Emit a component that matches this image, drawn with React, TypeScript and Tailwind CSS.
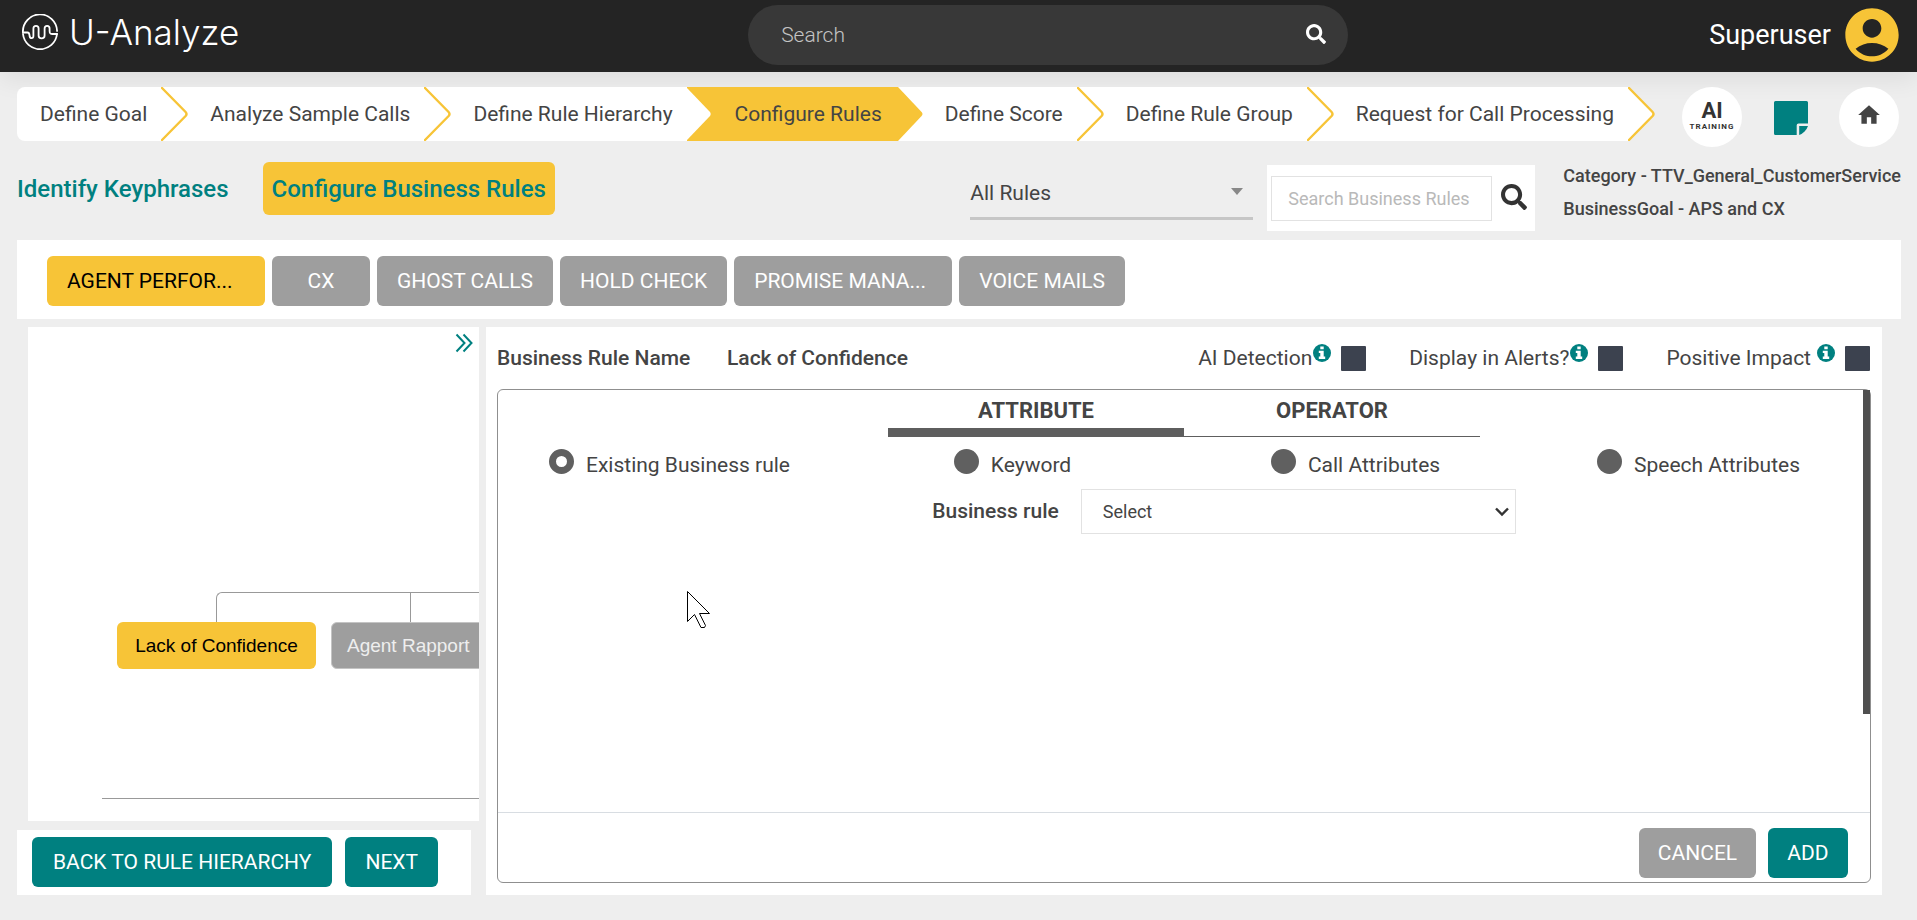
import React from "react";
import { FaSearch } from "react-icons/fa";
import { MdAccountCircle, MdHome } from "react-icons/md";

const tabs = ["AGENT PERFOR...", "CX", "GHOST CALLS", "HOLD CHECK", "PROMISE MANA...", "VOICE MAILS"];

const sources = ["Existing Business rule", "Keyword", "Call Attributes", "Speech Attributes"];

const flags = [
  { id: "ai-detection", label: "AI Detection", spaced: false },
  { id: "display-alerts", label: "Display in Alerts?", spaced: false },
  { id: "positive-impact", label: "Positive Impact", spaced: true },
];

function Logo() {
  return (
    <a href="#" className="flex items-center gap-[11px] text-white">
      <svg viewBox="0 0 36 36" className="size-9" fill="none" stroke="currentColor" strokeWidth="1.8" strokeLinecap="round" aria-hidden="true">
        <path d="M0.9 18 A17.1 17.1 0 0 1 35.1 17" />
        <path d="M35 20 A17.1 17.1 0 0 1 1 20" />
        <path d="M1 18.5 H5.5 C7.5 18.5 7.3 20 7.6 22 C8 24.8 11.4 24.8 11.4 22 V14.5 C11.4 11 16.6 11 16.6 14.5 V21.5 C16.6 25.4 22.6 25.4 22.6 21.5 V14.5 C22.6 11 27.6 11 27.6 14.5 V17 C27.6 20 28.6 20 30.5 20 H35" />
      </svg>
      <span className="font-['Inter',sans-serif] text-[35px] leading-10 font-light">U-Analyze</span>
    </a>
  );
}

function InfoIcon({ className }: { className: string }) {
  return (
    <svg viewBox="0 0 18 18" className={className} aria-hidden="true">
      <circle cx="9" cy="9" r="9" fill="currentColor" />
      <path d="M7.3 2.4 H10.7 V5.3 H7.3 Z M5.8 6.8 H10.7 V12.6 H12.2 V14.9 H5.8 V12.6 H7.3 V9.1 H5.8 Z" fill="#fff" />
    </svg>
  );
}

function Chevron() {
  return (
    <svg viewBox="0 0 27 54" className="h-[54px] w-[27px] shrink-0" aria-hidden="true">
      <path d="M0 0 L25 25 Q27 27 25 29 L0 54 Z" fill="#fff" />
      <path d="M1 1 L24.6 25 Q26.4 27 24.6 29 L1 53" fill="none" stroke="#f7c437" strokeWidth="2.4" strokeLinecap="round" />
    </svg>
  );
}

function Step({ children, first = false }: { children: string; first?: boolean }) {
  return (
    <li className="flex">
      <a
        href="#"
        className={
          first
            ? "flex h-[54px] items-center rounded-l-lg bg-white pt-0.5 pr-[14px] pl-[23px]"
            : "flex h-[54px] items-center bg-white pt-0.5 pr-[14px] pl-[22px]"
        }
      >
        {children}
      </a>
    </li>
  );
}

function Stepper() {
  return (
    <ol className="flex items-start text-[21px] whitespace-nowrap text-[#444]">
      <Step first>Define Goal</Step>
      <li className="bg-white"><Chevron /></li>
      <Step>Analyze Sample Calls</Step>
      <li className="bg-white"><Chevron /></li>
      <Step>Define Rule Hierarchy</Step>
      <li className="flex" aria-current="step">
        <svg viewBox="0 0 24 54" className="h-[54px] w-6" aria-hidden="true">
          <path d="M0 0 H24 V54 H0 Z" fill="#f7c437" />
          <path d="M0 1 L23 25 Q24.4 27 23 29 L0 53 Z" fill="#fff" />
        </svg>
        <a href="#" className="flex h-[54px] items-center bg-[#f7c437] pt-0.5 pr-4 pl-6">Configure Rules</a>
        <svg viewBox="0 0 25 54" className="h-[54px] w-[25px] bg-white" aria-hidden="true">
          <path d="M0 0 L23.6 25 Q25.4 27 23.6 29 L0 54 Z" fill="#f7c437" />
        </svg>
      </li>
      <Step>Define Score</Step>
      <li className="bg-white"><Chevron /></li>
      <Step>Define Rule Group</Step>
      <li className="bg-white"><Chevron /></li>
      <Step>Request for Call Processing</Step>
      <li><Chevron /></li>
    </ol>
  );
}

function RuleTree() {
  return (
    <div className="relative min-h-0 flex-1 overflow-hidden bg-white">
      <button type="button" aria-label="Expand panel" className="absolute top-[6px] right-[6px] text-[#008080]">
        <svg viewBox="0 0 18 20" className="h-5 w-[18px]" fill="none" stroke="currentColor" strokeWidth="2" aria-hidden="true">
          <path d="M1.5 1.5 L9.5 10 L1.5 18.5 M8.5 1.5 L16.5 10 L8.5 18.5" />
        </svg>
      </button>
      <div className="absolute top-[265px] left-[188px] h-[30px] w-[600px] rounded-tl-md border-t border-l border-[#999]" />
      <div className="absolute top-[265px] left-[382px] h-[30px] border-l border-[#999]" />
      <button type="button" className="absolute top-[295px] left-[89px] h-[47px] w-[199px] rounded-md bg-[#f7c437] pt-0.5 font-['Liberation_Sans',Arial,sans-serif] text-[19px] whitespace-nowrap text-black">
        Lack of Confidence
      </button>
      <button type="button" className="absolute top-[295px] left-[303px] h-[47px] rounded-md border border-[#c4c4c4] bg-[#9e9e9e] px-[15px] pt-0.5 font-['Liberation_Sans',Arial,sans-serif] text-[19px] whitespace-nowrap text-[#eee]">
        Agent Rapport
      </button>
      <div className="absolute top-[471px] left-[74px] w-[600px] border-t border-[#999]" />
    </div>
  );
}

function RuleEditor() {
  return (
    <section className="flex min-w-0 flex-1 flex-col bg-white px-[11px] pb-3">
      <div className="flex h-[62px] items-center text-[21px] text-[#444]">
        <span className="w-[230px] pt-0.5 font-medium">Business Rule Name</span>
        <span className="pt-0.5 font-medium">Lack of Confidence</span>
        <div className="ml-auto flex gap-[43px] pr-px">
          {flags.map((f) => (
            <div key={f.id} className="flex items-center">
              <label htmlFor={f.id} className="pt-0.5">{f.label}</label>
              <InfoIcon className={f.spaced ? "mb-2.5 ml-1.5 size-[18px] text-[#008080]" : "mb-2.5 ml-px size-[18px] text-[#008080]"} />
              <input id={f.id} type="checkbox" className="ml-2.5 size-[25px] appearance-none rounded-[1px] bg-[#3c424f]" />
            </div>
          ))}
        </div>
      </div>

      <div className="relative flex flex-1 flex-col rounded-md border border-[#8f8f8f]">
        <div className="absolute top-0 right-0 h-[324px] w-[7px] bg-[#4f4f4f]" />
        <div role="tablist" className="mx-auto grid w-[592px] grid-cols-2 text-[22px] font-bold text-[#444]">
          <button type="button" role="tab" aria-selected="true" className="h-[47px] border-b-[9px] border-[#5e5e5e] pt-[3px]">
            ATTRIBUTE
          </button>
          <button type="button" role="tab" aria-selected="false" className="h-[47px] border-b border-[#5e5e5e] pb-[5px]">
            OPERATOR
          </button>
        </div>

        <div className="grid grid-cols-4 pt-3 text-[21px] text-[#444]">
          {sources.map((s, i) => (
            <label key={s} className="flex justify-center gap-3">
              <input
                type="radio"
                name="source"
                defaultChecked={i === 0}
                className="size-[25px] appearance-none rounded-full bg-[#606060] checked:border-[7px] checked:border-[#606060] checked:bg-white"
              />
              <span className="pt-1 leading-6">{s}</span>
            </label>
          ))}
        </div>

        <div className="mt-3 flex items-center justify-center gap-[22px] pl-20">
          <label htmlFor="business-rule" className="text-[21px] font-medium text-[#444]">
            Business rule
          </label>
          <div className="relative">
            <select id="business-rule" className="h-[45px] w-[435px] appearance-none border border-[#e2e2e2] bg-white pl-[21px] text-lg text-[#444]">
              <option>Select</option>
            </select>
            <svg viewBox="0 0 14 10" className="pointer-events-none absolute top-[18px] right-[7px] h-[10px] w-[14px]" fill="none" stroke="#333" strokeWidth="2.4" aria-hidden="true">
              <path d="M1 1.5 L7 7.5 L13 1.5" />
            </svg>
          </div>
        </div>

        <div className="mt-auto flex justify-end gap-3 border-t border-[#d8dde2] pt-[15px] pr-[22px] pb-1 text-[21px] text-white">
          <button type="button" className="h-[50px] w-[117px] rounded-md bg-[#9e9e9e] pt-0.5">CANCEL</button>
          <button type="button" className="h-[50px] w-20 rounded-md bg-[#008080] pt-0.5">ADD</button>
        </div>
      </div>
    </section>
  );
}

function Cursor() {
  return (
    <svg viewBox="0 0 24 38" className="pointer-events-none absolute top-[591px] left-[687px] h-[38px] w-6" aria-hidden="true">
      <path d="M0.5 0.5 V30.5 L7.5 23.5 L14 36.5 H17.5 L18.5 34.5 L12.5 22.5 H22.5 Z" fill="#fff" stroke="#000" />
    </svg>
  );
}

export default function App() {
  return (
    <div className="relative flex min-h-screen flex-col overflow-hidden bg-[#eee] font-['Roboto',sans-serif]">
      <header className="flex h-[72px] items-center bg-[#242424] pr-[17px] pl-[22px] shadow-[0_8px_24px_rgba(0,0,0,0.07)]">
        <div className="flex-[25] pb-2"><Logo /></div>
        <form className="mb-0.5 flex h-[60px] w-[600px] items-center rounded-full bg-[#383838] pr-[22px] pl-[33px]">
          <input aria-label="Search" placeholder="Search" className="min-w-0 flex-1 bg-transparent pt-0.5 text-[21px] font-light text-white outline-none placeholder:text-[#c4c4c4]" />
          <button type="button" aria-label="Search" className="pb-0.5 text-white"><FaSearch className="size-5" /></button>
        </form>
        <div className="flex flex-[19] items-center justify-end gap-[9px] pb-0.5 text-[27px] text-white">
          Superuser
          <MdAccountCircle className="-mr-1 size-16 text-[#f7c437]" />
        </div>
      </header>

      <nav className="flex justify-between pt-[15px] pr-[18px] pl-[17px]">
        <Stepper />
        <div className="flex items-start">
          <a href="#" aria-label="AI training" className="flex size-[60px] flex-col items-center justify-center rounded-full bg-white text-[#333]">
            <span className="text-[22px] leading-5 font-bold">AI</span>
            <span className="text-[8px] leading-3 font-bold tracking-[1px]">TRAINING</span>
          </a>
          <a href="#" aria-label="Notes" className="mt-[14px] mr-[31px] ml-8 text-[#008080]">
            <svg viewBox="0 0 34 34" className="size-[34px]" fill="currentColor" aria-hidden="true">
              <path d="M1.5 0 H32.5 Q34 0 34 1.5 V22.5 H24.5 Q22.7 22.5 22.7 24.3 V34 H1.5 Q0 34 0 32.5 V1.5 Q0 0 1.5 0 Z" />
              <path d="M25.2 25 H34 Q33 28 30.6 30.4 Q28 33 25.2 34 Z" />
            </svg>
          </a>
          <a href="#" aria-label="Home" className="flex size-[60px] items-center justify-center rounded-full bg-white pb-1 text-[#444]">
            <MdHome className="size-[26px]" />
          </a>
        </div>
      </nav>

      <div className="flex h-[93px] items-start pt-[15px] pr-4 pl-[17px]">
        <a href="#" className="flex h-[53px] items-center text-2xl font-medium text-[#008080]">Identify Keyphrases</a>
        <a href="#" className="ml-[34px] flex h-[53px] items-center rounded-md bg-[#f7c437] px-[9px] text-2xl font-medium text-[#008080]">
          Configure Business Rules
        </a>
        <div className="relative mt-2 ml-auto">
          <select aria-label="Rule filter" className="h-[50px] w-[283px] appearance-none border-b-[3px] border-[#c6c6c6] bg-transparent text-[21px] text-[#444]">
            <option>All Rules</option>
          </select>
          <span className="pointer-events-none absolute top-[18px] right-[10px] border-x-[6px] border-t-[7px] border-x-transparent border-t-[#888]" />
        </div>
        <form className="mt-[3px] ml-[14px] flex h-[66px] items-center gap-[9px] bg-white pr-2 pl-1">
          <input aria-label="Search Business Rules" placeholder="Search Business Rules" className="h-[45px] w-[221px] border border-[#e2e2e2] pl-4 text-lg outline-none placeholder:text-[#b9b9b9]" />
          <button type="button" aria-label="Search rules" className="pb-0.5 text-[#333]"><FaSearch className="size-[26px]" /></button>
        </form>
        <div className="-mt-[3px] ml-7 text-lg leading-[33px] font-medium whitespace-nowrap text-[#444]">
          <p>Category - TTV_General_CustomerService</p>
          <p>BusinessGoal - APS and CX</p>
        </div>
      </div>

      <div className="mr-4 ml-[17px] flex h-[79px] items-start gap-[7px] bg-white pt-4 pl-[30px] text-[21px]">
        {tabs.map((t, i) => (
          <button
            key={t}
            type="button"
            className={
              i === 0
                ? "h-[50px] w-[218px] rounded-md bg-[#f7c437] pt-0.5 pl-5 text-left text-black"
                : t.endsWith("...")
                  ? "h-[50px] w-[218px] rounded-md bg-[#9e9e9e] pt-0.5 pl-5 text-left text-white"
                  : "h-[50px] min-w-[98px] rounded-md bg-[#9e9e9e] px-5 pt-0.5 text-white"
            }
          >
            {t}
          </button>
        ))}
      </div>

      <main className="flex flex-1 gap-[7px] pt-2 pr-[35px] pb-[25px] pl-[17px]">
        <div className="flex w-[462px] flex-col gap-[9px]">
          <div className="flex flex-1 flex-col pl-[11px]"><RuleTree /></div>
          <div className="mr-2 flex h-[65px] gap-[13px] bg-white pt-[7px] pl-[15px] text-[21px] text-white">
            <button type="button" className="h-[50px] rounded-md bg-[#008080] px-[21px] pt-0.5">BACK TO RULE HIERARCHY</button>
            <button type="button" className="h-[50px] rounded-md bg-[#008080] px-5 pt-0.5">NEXT</button>
          </div>
        </div>
        <RuleEditor />
      </main>
      <Cursor />
    </div>
  );
}
